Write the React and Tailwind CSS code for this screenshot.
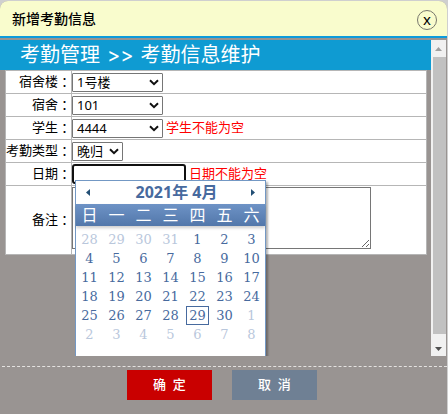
import React from "react";

const weekdays = ["日", "一", "二", "三", "四", "五", "六"];

const days = [
  ...[28, 29, 30, 31].map((d) => ({ d, muted: true })),
  ...Array.from({ length: 30 }, (_, i) => ({ d: i + 1, muted: false })),
  ...[1, 2, 3, 4, 5, 6, 7, 8].map((d) => ({ d, muted: true })),
];

function Select({ id, value, width }) {
  return (
    <span className={`relative inline-block h-[19px] ${width}`}>
      <select
        id={id}
        className="block h-full w-full appearance-none rounded-[1px] border border-[#767676] bg-white pl-1 text-[13px] leading-[17px] text-black"
      >
        <option>{value}</option>
      </select>
      <svg
        className="pointer-events-none absolute top-[6px] right-1 h-[7px] w-[10px]"
        viewBox="0 0 10 7"
        fill="none"
        stroke="#111"
        strokeWidth="2"
      >
        <path d="M1 1.2 5 5.2 9 1.2" />
      </svg>
    </span>
  );
}

function Row({ id, label, tall, children }) {
  return (
    <div className="flex border-b border-[#b6b6b6]">
      <label
        htmlFor={id}
        className="flex w-[66px] shrink-0 items-center justify-end border-r border-[#b6b6b6] whitespace-nowrap"
      >
        {label}
        <span className="font-['Noto_Sans_CJK_JP',sans-serif]" lang="ja">：</span>
      </label>
      <div className={`flex min-w-0 flex-1 items-center gap-[3px] ${tall ? "h-[68px]" : "h-[22px]"}`}>
        {children}
      </div>
    </div>
  );
}

function Calendar() {
  return (
    <div className="absolute top-4 left-[3px] z-10 h-[200px] w-[191px] border border-[#7398c4] bg-white text-[#476a9e] shadow-[2px_2px_2px_rgba(0,0,0,0.3)]">
      <div className="flex h-[23px] items-center px-[10px]">
        <button type="button" aria-label="上个月">
          <svg className="h-[7px] w-1" viewBox="0 0 4 7" fill="#234f75">
            <path d="M4 0v7L0 3.5z" />
          </svg>
        </button>
        <span className="flex-1 pl-3 text-center text-base leading-[23px] font-bold">2021年 4月</span>
        <button type="button" aria-label="下个月">
          <svg className="h-[7px] w-1" viewBox="0 0 4 7" fill="#234f75">
            <path d="M0 0v7l4-3.5z" />
          </svg>
        </button>
      </div>
      <div className="grid h-[22px] grid-cols-7 bg-linear-to-b from-[#6e93c6] to-[#5277aa] text-center text-base leading-[22px] text-white shadow-[0_2px_3px_rgba(0,0,0,0.2)]">
        {weekdays.map((w) => (
          <span key={w}>{w}</span>
        ))}
      </div>
      <div className="grid grid-cols-7 pt-1 font-['DejaVu_Serif','Liberation_Serif',serif] text-[13px]">
        {days.map(({ d, muted }, i) => (
          <button
            type="button"
            key={i}
            className={`mx-auto h-[19px] w-[23px] text-center leading-[17px] ${
              muted ? "text-[#b9c7dc]" : "text-[#476a9e]"
            } ${!muted && d === 29 ? "border border-[#476a9e]" : "border border-transparent"}`}
          >
            {d}
          </button>
        ))}
      </div>
    </div>
  );
}

export default function App() {
  return (
    <div className="h-screen bg-[#cfcfcf] pt-px pr-px font-['Noto_Sans','Noto_Sans_CJK_SC',sans-serif] text-[13px] text-black">
      <div className="flex h-full flex-col overflow-hidden rounded-t-lg bg-[#999492]">
        <header className="flex h-[37px] shrink-0 items-center justify-between border-b-2 border-[#0d9bdb] bg-[#f9fccd] pr-[10px] pl-3">
          <h1 className="text-sm font-medium">新增考勤信息</h1>
          <button
            type="button"
            aria-label="关闭"
            className="mt-[2px] flex size-5 items-center justify-center rounded-full border border-[#77776c] text-[15px] leading-none"
          >
            x
          </button>
        </header>

        <div className="mt-[2px] flex min-h-0 flex-1">
          <main className="min-w-0 flex-1 overflow-hidden">
            <h2 className="flex h-[30px] items-center gap-[7px] bg-[#0f9bd2] pl-5 text-xl leading-[30px] text-white">
              <span>考勤管理</span>
              <span className="font-['Inter',sans-serif]">&gt;&gt;</span>
              <span>考勤信息维护</span>
            </h2>
            <form className="mr-1 ml-[5px] border-t border-r border-l border-[#b6b6b6] bg-white">
              <Row id="building" label="宿舍楼">
                <Select id="building" value="1号楼" width="w-[91px]" />
              </Row>
              <Row id="room" label="宿舍">
                <Select id="room" value="101" width="w-[91px]" />
              </Row>
              <Row id="student" label="学生">
                <Select id="student" value="4444" width="w-[91px]" />
                <span className="text-[#ff0000]">学生不能为空</span>
              </Row>
              <Row id="type" label="考勤类型">
                <Select id="type" value="晚归" width="w-[51px]" />
              </Row>
              <Row id="date" label="日期">
                <span className="relative">
                  <input
                    id="date"
                    type="text"
                    className="block h-5 w-[114px] rounded-[3px] border-2 border-[#101010] bg-white px-1 outline-none"
                  />
                  <Calendar />
                </span>
                <span className="text-[#ff0000]">日期不能为空</span>
              </Row>
              <Row id="remark" label="备注" tall>
                <textarea
                  id="remark"
                  className="mb-1 h-[62px] w-[299px] resize border border-[#767676] bg-white"
                />
              </Row>
            </form>
          </main>

          <div className="mr-px flex w-[15px] shrink-0 flex-col bg-[#f1f1f1]">
            <div className="flex h-[17px] items-center justify-center">
              <svg className="h-1 w-[7px]" viewBox="0 0 7 4" fill="#a0a0a0">
                <path d="M0 4h7L3.5 0z" />
              </svg>
            </div>
            <div className="ml-[2px] flex-1 bg-[#c1c1c1]" />
            <div className="flex h-[22px] items-center justify-center pt-2">
              <svg className="h-1 w-[7px]" viewBox="0 0 7 4" fill="#505050">
                <path d="M0 0h7L3.5 4z" />
              </svg>
            </div>
          </div>
        </div>

        <footer className="mt-[10px] ml-[2px] flex h-12 shrink-0 justify-center gap-5 border-t border-dashed border-[#e4e2e0] pt-[3px] pr-[5px] text-white">
          <button type="button" className="h-[30px] w-[85px] bg-[#c90000] font-medium">
            确&nbsp;&nbsp;定
          </button>
          <button type="button" className="h-[30px] w-[85px] bg-[#6f8094] font-medium">
            取&nbsp;&nbsp;消
          </button>
        </footer>
      </div>
    </div>
  );
}
